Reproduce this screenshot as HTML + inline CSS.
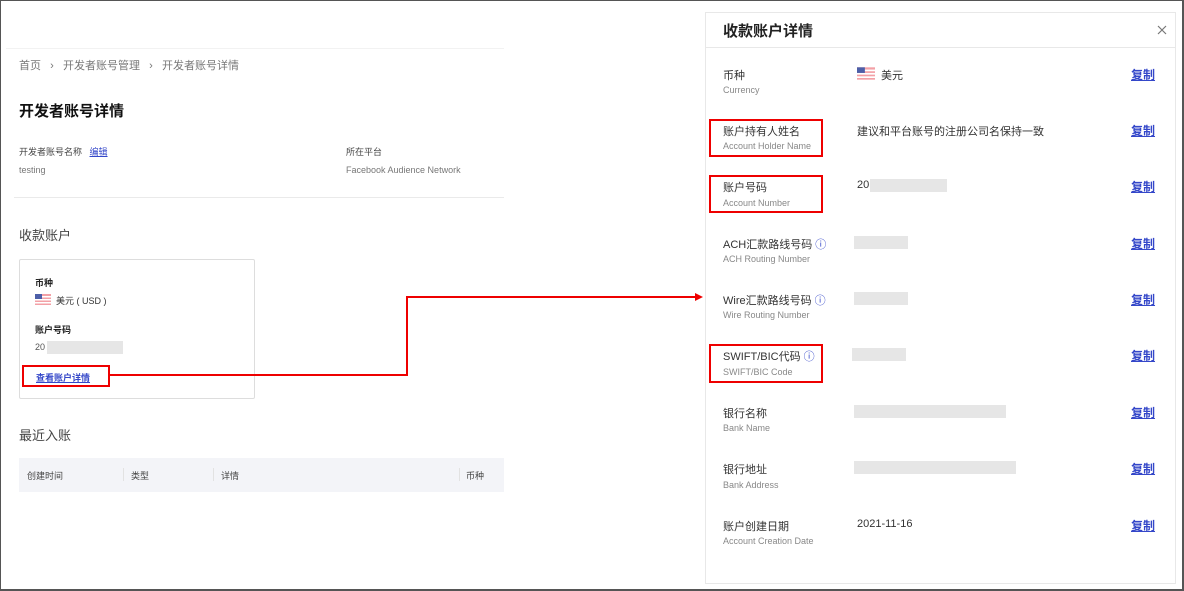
<!DOCTYPE html>
<html><head><meta charset="utf-8"><style>
*{margin:0;padding:0;box-sizing:border-box}
body{width:1184px;height:591px;position:relative;background:#fff;font-family:"Liberation Sans","Noto Sans CJK SC",sans-serif;overflow:hidden;color:#333}
.a{position:absolute;white-space:nowrap}
.frame{position:absolute;left:0;top:0;width:1184px;height:591px;border:1px solid #555;border-right-width:2px;border-bottom-width:2px;pointer-events:none;z-index:10}
.s12{font-size:11px}
.g{color:#777}
.lnk{color:#3447c9;text-decoration:underline}
.blur{position:absolute;background:#e6e6e6}
.lab{font-size:11px;color:#333}
.sub{font-size:9px;color:#888}
.copy{position:absolute;left:1131px;font-size:12px;color:#3447c9;text-decoration:underline;font-weight:bold}
.rb{position:absolute;border:2px solid #e00}
</style></head><body>
<div class="frame"></div>
<div class="a" style="left:6px;top:48px;width:498px;height:1px;background:#f2f2f2"></div>
<div class="a s12 g" style="left:19px;top:57px;font-size:11px">首页 &nbsp;&nbsp;›&nbsp;&nbsp; 开发者账号管理 &nbsp;&nbsp;›&nbsp;&nbsp; 开发者账号详情</div>
<div class="a" style="left:19px;top:100px;font-size:15px;font-weight:bold;color:#111">开发者账号详情</div>
<div class="a" style="left:19px;top:145px;font-size:9px;color:#444">开发者账号名称 &nbsp;&nbsp;<span class="lnk">编辑</span></div>
<div class="a g" style="left:19px;top:165px;font-size:9px">testing</div>
<div class="a" style="left:346px;top:145px;font-size:9px;color:#444">所在平台</div>
<div class="a g" style="left:346px;top:165px;font-size:9px">Facebook Audience Network</div>
<div class="a" style="left:14px;top:197px;width:490px;height:1px;background:#eaeaea"></div>
<div class="a" style="left:19px;top:225px;font-size:13px;color:#444">收款账户</div>
<div class="a" style="left:19px;top:259px;width:236px;height:140px;border:1px solid #ddd;border-radius:2px"></div>
<div class="a" style="left:35px;top:276px;font-size:9px;font-weight:bold;color:#222">币种</div>
<svg class="a" style="left:35px;top:294px" width="16" height="11" viewBox="0 0 16 11"><rect width="16" height="11" fill="#f3a0a6"/><rect y="2" width="16" height="1.5" fill="#fff"/><rect y="5" width="16" height="1.5" fill="#fff"/><rect y="8" width="16" height="1.5" fill="#fff"/><rect width="7" height="5" fill="#4d5fa8"/></svg>
<div class="a" style="left:56px;top:294px;font-size:9px;color:#333">美元 ( USD )</div>
<div class="a" style="left:35px;top:323px;font-size:9px;font-weight:bold;color:#222">账户号码</div>
<div class="a" style="left:35px;top:342px;font-size:9px;color:#555">20</div>
<div class="blur" style="left:47px;top:341px;width:76px;height:13px"></div>
<div class="a lnk" style="left:36px;top:371px;font-size:9px;font-weight:bold">查看账户详情</div>
<div class="rb" style="left:22px;top:365px;width:88px;height:22px"></div>
<div class="a" style="left:19px;top:425px;font-size:13px;color:#444">最近入账</div>
<div class="a" style="left:19px;top:458px;width:485px;height:34px;background:#f3f4f8"></div>
<div class="a" style="left:27px;top:469px;font-size:9px;color:#444">创建时间</div>
<div class="a" style="left:123px;top:468px;width:1px;height:13px;background:#e2e2e2"></div>
<div class="a" style="left:131px;top:469px;font-size:9px;color:#444">类型</div>
<div class="a" style="left:213px;top:468px;width:1px;height:13px;background:#e2e2e2"></div>
<div class="a" style="left:221px;top:469px;font-size:9px;color:#444">详情</div>
<div class="a" style="left:459px;top:468px;width:1px;height:13px;background:#e2e2e2"></div>
<div class="a" style="left:466px;top:469px;font-size:9px;color:#444">币种</div>
<svg class="a" style="left:0;top:0;z-index:5" width="1184" height="591"><polyline points="110,375 407,375 407,297 696,297" fill="none" stroke="#e00" stroke-width="2"/><polygon points="703,297 695,293 695,301" fill="#e00"/></svg>
<div class="a" style="left:705px;top:12px;width:471px;height:572px;border:1px solid #e8e8e8;background:#fff"></div>
<div class="a" style="left:705px;top:47px;width:471px;height:1px;background:#e8e8e8"></div>
<div class="a" style="left:723px;top:20px;font-size:15px;font-weight:bold;color:#222">收款账户详情</div>
<svg class="a" style="left:1157px;top:25px" width="10" height="10" viewBox="0 0 10 10"><path d="M1 1L9 9M9 1L1 9" stroke="#777" stroke-width="1.2"/></svg>
<svg class="a" style="left:857px;top:67px" width="18" height="13" viewBox="0 0 16 11"><rect width="16" height="11" fill="#f3a0a6"/><rect y="2" width="16" height="1.5" fill="#fff"/><rect y="5" width="16" height="1.5" fill="#fff"/><rect y="8" width="16" height="1.5" fill="#fff"/><rect width="7" height="5" fill="#4d5fa8"/></svg>
<div class="a" style="left:881px;top:67px;font-size:11px">美元</div>
<div class="a" style="left:857px;top:123px;font-size:11px">建议和平台账号的注册公司名保持一致</div>
<div class="a" style="left:857px;top:179px;font-size:11px">20</div>
<div class="blur" style="left:870px;top:179px;width:77px;height:13px"></div>
<div class="blur" style="left:854px;top:236px;width:54px;height:13px"></div>
<div class="blur" style="left:854px;top:292px;width:54px;height:13px"></div>
<div class="blur" style="left:852px;top:348px;width:54px;height:13px"></div>
<div class="blur" style="left:854px;top:405px;width:152px;height:13px"></div>
<div class="blur" style="left:854px;top:461px;width:162px;height:13px"></div>
<div class="a" style="left:857px;top:518px;font-size:11px">2021-11-16</div>
<div class="a lab" style="left:723px;top:67px">币种</div><div class="a sub" style="left:723px;top:85px">Currency</div><div class="copy" style="top:66px">复制</div>
<div class="a lab" style="left:723px;top:123px">账户持有人姓名</div><div class="a sub" style="left:723px;top:141px">Account Holder Name</div><div class="copy" style="top:122px">复制</div>
<div class="a lab" style="left:723px;top:179px">账户号码</div><div class="a sub" style="left:723px;top:198px">Account Number</div><div class="copy" style="top:178px">复制</div>
<div class="a lab" style="left:723px;top:236px">ACH汇款路线号码 <span style="color:#3447c9">ⓘ</span></div><div class="a sub" style="left:723px;top:254px">ACH Routing Number</div><div class="copy" style="top:235px">复制</div>
<div class="a lab" style="left:723px;top:292px">Wire汇款路线号码 <span style="color:#3447c9">ⓘ</span></div><div class="a sub" style="left:723px;top:310px">Wire Routing Number</div><div class="copy" style="top:291px">复制</div>
<div class="a lab" style="left:723px;top:348px">SWIFT/BIC代码 <span style="color:#3447c9">ⓘ</span></div><div class="a sub" style="left:723px;top:367px">SWIFT/BIC Code</div><div class="copy" style="top:347px">复制</div>
<div class="a lab" style="left:723px;top:405px">银行名称</div><div class="a sub" style="left:723px;top:423px">Bank Name</div><div class="copy" style="top:404px">复制</div>
<div class="a lab" style="left:723px;top:461px">银行地址</div><div class="a sub" style="left:723px;top:480px">Bank Address</div><div class="copy" style="top:460px">复制</div>
<div class="a lab" style="left:723px;top:518px">账户创建日期</div><div class="a sub" style="left:723px;top:536px">Account Creation Date</div><div class="copy" style="top:517px">复制</div>
<div class="rb" style="left:709px;top:119px;width:114px;height:38px"></div>
<div class="rb" style="left:709px;top:175px;width:114px;height:38px"></div>
<div class="rb" style="left:709px;top:344px;width:114px;height:39px"></div>
</body></html>
